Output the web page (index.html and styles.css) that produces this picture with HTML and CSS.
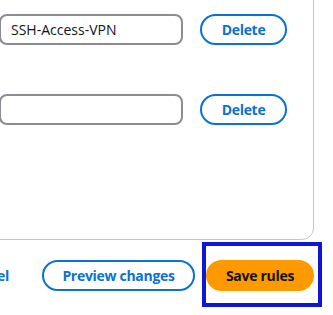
FILE: index.html
```html
<!DOCTYPE html>
<html lang="en">

<head>
    <meta charset="UTF-8">
    <meta name="viewport" content="width=device-width, initial-scale=1.0">
    <title>Edit rules</title>
    <link rel="stylesheet" href="styles.css">
</head>

<body>
    <div class="rules-card">
        <div class="rule-row">
            <input class="rule-input" type="text" value="SSH-Access-VPN">
            <button class="btn btn-normal btn-delete">Delete</button>
        </div>
        <div class="rule-row">
            <input class="rule-input" type="text" value="">
            <button class="btn btn-normal btn-delete">Delete</button>
        </div>
    </div>
    <div class="form-actions">
        <button class="btn btn-link">Cancel</button>
        <button class="btn btn-normal btn-preview">Preview changes</button>
        <span class="focus-ring">
            <button class="btn btn-primary">Save rules</button>
        </span>
    </div>
</body>

</html>
```

FILE: styles.css
```css
body {
    margin: 0;
    padding: 0;
    width: 333px;
    height: 315px;
    overflow: hidden;
    background-color: #ffffff;
    font-family: "Open Sans", "Noto Sans", sans-serif;
    color: #0f141a;
}

.rules-card {
    box-sizing: border-box;
    width: 336px;
    margin: -20px 0 0 -22px;
    padding: 33px 26px 114px 20px;
    border: 1px solid #c6c6cd;
    border-radius: 12px;
    display: flex;
    flex-direction: column;
    gap: 49px;
}

.rule-row {
    display: flex;
    align-items: center;
    gap: 17px;
}

.rule-input {
    flex: 1;
    box-sizing: border-box;
    height: 31px;
    min-width: 0;
    padding: 0 10px;
    border: 2px solid #8c8c94;
    border-radius: 8px;
    font: normal 14px/27px "Open Sans", "Noto Sans", sans-serif;
    color: #0f141a;
    outline: none;
}

.btn {
    flex: none;
    box-sizing: border-box;
    height: 31px;
    padding: 0 20px;
    border: 2px solid transparent;
    border-radius: 20px;
    background: none;
    font: bold 14px/27px "Open Sans", "Noto Sans", sans-serif;
    letter-spacing: -0.3px;
    white-space: nowrap;
    cursor: pointer;
}

.btn-normal {
    border-color: #0972d3;
    color: #0972d3;
    background-color: #ffffff;
}

.btn-delete {
    width: 87px;
    padding: 0;
}

.btn-preview {
    width: 153px;
    padding: 0;
}

.btn-link {
    color: #0972d3;
}

.btn-primary {
    background-color: #ff9900;
    color: #0f141a;
    width: 108px;
    padding: 0;
}

.form-actions {
    width: 314px;
    margin-top: 20px;
    display: flex;
    justify-content: flex-end;
    align-items: center;
    gap: 11px;
}

.focus-ring {
    flex: none;
    display: inline-flex;
    border: 4px solid #1016d6;
    padding: 14px 4px 12px 0;
    margin: -18px -8px -16px -4px;
}
```
